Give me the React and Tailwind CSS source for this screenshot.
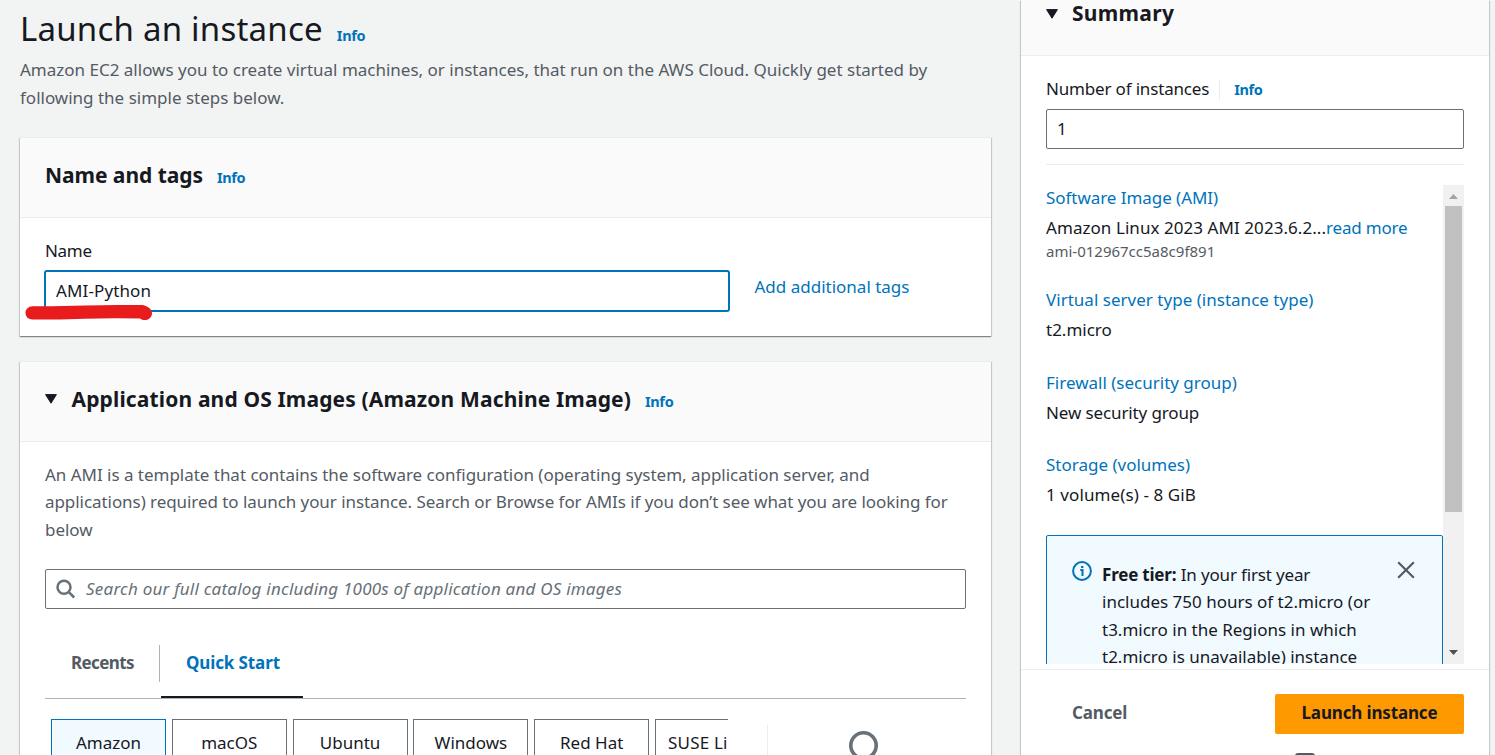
const cardShadow =
  'border-t border-[#eaeded] shadow-[0_1px_1px_0_rgba(0,28,36,0.3),1px_1px_1px_0_rgba(0,28,36,0.15),-1px_1px_1px_0_rgba(0,28,36,0.15)]';

function Info({ className = '' }) {
  return <a className={`text-[14.5px] font-bold tracking-[-0.35px] text-[#0073bb] ${className}`}>Info</a>;
}

function Caret({ className = '' }) {
  return (
    <svg className={`h-[10px] w-3 shrink-0 ${className}`} viewBox="0 0 12 10" fill="#16191f" stroke="#16191f" strokeLinejoin="round">
      <path d="M0.6 0.6h10.8L6 9.2z" />
    </svg>
  );
}

function SearchIcon() {
  return (
    <svg className="h-5 w-5 shrink-0" viewBox="0 0 20 20" fill="none" stroke="#687078" strokeWidth="2.5">
      <circle cx="8" cy="8.3" r="6.5" />
      <path d="M12.6 12.9l5.6 5.6" />
    </svg>
  );
}

function NameCard() {
  return (
    <section className={`relative h-[199px] bg-white ${cardShadow}`}>
      <header className="flex h-[80px] items-baseline gap-[14px] border-b border-[#eaeded] bg-[#fafafa] px-[25px] pt-[23px]">
        <h2 className="text-[21px] font-bold leading-7 tracking-[-0.05px]">Name and tags</h2>
        <Info />
      </header>
      <div className="px-[25px] pt-[19px]">
        <label className="block leading-[27px] tracking-[-0.3px]">Name</label>
        <div className="-ml-px mt-[6px] flex items-start">
          <div className="flex h-[42px] w-[686px] items-center rounded-[3px] border-2 border-[#0073bb] bg-white px-[10px] tracking-[0.12px]">
            AMI-Python
          </div>
          <a className="ml-[24.500px] mt-[3px] leading-[27px] text-[#0073bb]">Add additional tags</a>
        </div>
      </div>
      <svg className="absolute left-[5px] top-[166px] h-4 w-[128px]" viewBox="0 0 128 16" fill="#e81c1c">
        <path d="M7.500 2.300L27 2.200L60 1.400L92 1L117 1C122 1.600 127 4.800 127 9.200C127 13 124 16 120 16C118 16 116.500 15.600 115 14.400L90 14.300L60 14.700L35 15.500L7.500 15.500C3.500 15.500 0.500 12.700 0.500 9C0.500 5.300 3.500 2.300 7.500 2.300z" />
      </svg>
    </section>
  );
}

const osList = [
  { name: 'Amazon', selected: true },
  { name: 'macOS' },
  { name: 'Ubuntu' },
  { name: 'Windows' },
  { name: 'Red Hat' },
  { name: 'SUSE Li', cut: true },
];

function ImagesCard() {
  return (
    <section className={`mt-[25px] bg-white ${cardShadow}`}>
      <header className="flex h-[80px] items-baseline border-b border-[#eaeded] bg-[#fafafa] px-[25px] pt-[23px]">
        <Caret className="mt-[9px] self-start" />
        <h2 className="ml-[14.500px] text-[21px] font-bold leading-7 tracking-[0.145px]">
          Application and OS Images (Amazon Machine Image)
        </h2>
        <Info className="ml-[14px]" />
      </header>
      <div className="px-[25px] pt-[18.750px]">
        <p className="leading-[27.5px] tracking-[-0.06px] text-[#545b64]">
          <span className="tracking-[-0.025px]">
            An AMI is a template that contains the software configuration (operating system, application server, and
          </span>{' '}
          applications) required to launch your instance. Search or Browse for AMIs if you don’t see what you are looking
          for below
        </p>
        <div className="mt-[25.750px] flex h-10 items-center gap-[10px] rounded-[2px] border border-[#687078] px-[10px]">
          <SearchIcon />
          <span className="italic tracking-[0.22px] text-[#687078]">
            Search our full catalog including 1000s of application and OS images
          </span>
        </div>
        <nav className="mt-9 flex h-[54px] border-b border-[#aab7b8]">
          <div className="h-[37px] w-[115px] border-r border-[#aab7b8] pl-[26px]">
            <span className="block font-bold leading-[35px] tracking-[-0.6px] text-[#545b64]">Recents</span>
          </div>
          <div className="ml-px h-[53px] w-[142px] border-b-2 border-[#16191f] pl-[25px]">
            <span className="block font-bold leading-[35px] tracking-[-0.12px] text-[#0073bb]">Quick Start</span>
          </div>
        </nav>
        <div className="flex pl-[6px] pt-5">
          <div className="flex w-[677px] gap-[5.800px] overflow-hidden">
            {osList.map(({ name, selected, cut }) => (
              <div
                key={name}
                className={`h-20 w-[115px] shrink-0 border pt-[9px] leading-[27px] ${
                  selected ? 'border-[#0073bb] bg-[#f1faff]' : 'border-[#687078]'
                } ${cut ? 'pl-[12px] tracking-[0.2px]' : 'text-center'}`}
              >
                {name}
              </div>
            ))}
          </div>
          <div className="ml-[39px] mt-[6px] h-20 w-px bg-[#eaeded]" />
          <svg className="ml-[81px] mt-3 h-10 w-10 shrink-0" viewBox="0 0 40 40" fill="none" stroke="#687078" strokeWidth="3.6">
            <circle cx="14.500" cy="14.500" r="12.700" />
            <path d="M23.500 23.500l12 12" />
          </svg>
        </div>
      </div>
    </section>
  );
}

function Entry({ label, children, className = '' }) {
  return (
    <div className={`leading-6 ${className}`}>
      <a className="block text-[#0073bb]">{label}</a>
      <div className="mt-[6px]">{children}</div>
    </div>
  );
}

function FreeTier() {
  return (
    <div className="mt-[28px] flex h-[200px] items-start rounded-[2px] border border-[#0073bb] bg-[#f1faff] pl-[25px] pt-[25px]">
      <svg className="h-5 w-5 shrink-0" viewBox="0 0 20 20" fill="none" stroke="#0073bb" strokeWidth="2">
        <circle cx="10" cy="10" r="8.900" />
        <path d="M8.300 9h2.200v6M9 6h2.400" />
      </svg>
      <p className="-mt-[0.250px] ml-[10px] w-[280px] leading-[27.5px]">
        <b className="tracking-[-0.2px]">Free tier:</b> <span className="tracking-[-0.16px]">In your first year</span>
        <br />
        includes 750 hours of t2.micro (or
        <br />
        t3.micro in the Regions in which
        <br />
        t2.micro is unavailable) instance
      </p>
      <svg className="ml-[15px] h-[18px] w-[18px] shrink-0" viewBox="0 0 18 18" stroke="#545b64" strokeWidth="2.200">
        <path d="M1.200 1.200l15.600 15.600M16.800 1.200L1.200 16.800" />
      </svg>
    </div>
  );
}

function Scrollbar() {
  return (
    <div className="flex w-[21px] shrink-0 flex-col items-center bg-[#f1f1f1]">
      <svg className="h-[21px] w-[21px] shrink-0" viewBox="0 0 21 21" fill="#a3a3a3">
        <path d="M10.500 9L15 14H6z" />
      </svg>
      <div className="h-[306px] w-[17px] bg-[#c1c1c1]" />
      <svg className="mb-[2px] mt-auto h-[21px] w-[21px] shrink-0" viewBox="0 0 21 21" fill="#505050">
        <path d="M10.500 14L15 9H6z" />
      </svg>
    </div>
  );
}

function Summary() {
  return (
    <aside className="ml-[30px] flex h-[800px] w-[468px] shrink-0 flex-col bg-white shadow-[0_1px_1px_0_rgba(0,28,36,0.3),1px_1px_1px_0_rgba(0,28,36,0.15),-1px_1px_1px_0_rgba(0,28,36,0.15)]">
      <header className="flex h-[56px] shrink-0 items-start border-b border-[#eaeded] bg-[#fafafa] pl-[25px]">
        <Caret className="mt-[9px]" />
        <h2 className="-mt-px ml-[14px] text-[21px] font-bold leading-7 tracking-[0.3px]">Summary</h2>
      </header>
      <div className="px-[25px] pt-[19px]">
        <div className="flex h-[27px] items-center">
          <span className="leading-[27px] tracking-[-0.17px]">Number of instances</span>
          <span className="ml-[10px] mt-[3px] h-5 w-px bg-[#eaeded]" />
          <Info className="ml-[14px] mt-[2px]" />
        </div>
        <div className="mt-[7px] flex h-10 items-center rounded-[2px] border border-[#687078] px-[10px]">1</div>
        <div className="mt-[15px] h-px bg-[#eaeded]" />
        <div className="mt-5 flex h-[479px] overflow-hidden">
          <div className="min-w-0 flex-1 pt-px">
            <Entry label={<span className="tracking-[-0.05px]">Software Image (AMI)</span>}>
              <span className="tracking-[0.06px]">Amazon Linux 2023 AMI 2023.6.2...</span>
              <a className="tracking-[-0.2px] text-[#0073bb]">read more</a>
              <div className="-mt-px text-[15px] text-[#545b64]">ami-012967cc5a8c9f891</div>
            </Entry>
            <Entry className="mt-[25px]" label={<span className="tracking-[0.02px]">Virtual server type (instance type)</span>}>
              t2.micro
            </Entry>
            <Entry className="mt-[29px]" label="Firewall (security group)">
              <span className="tracking-[-0.12px]">New security group</span>
            </Entry>
            <Entry className="mt-[28px]" label="Storage (volumes)">
              <span className="tracking-[0.1px]">1 volume(s) - 8 GiB</span>
            </Entry>
            <FreeTier />
          </div>
          <Scrollbar />
        </div>
      </div>
      <footer className="mt-[5px] border-t border-[#eaeded] px-[25px] pt-6">
        <div className="flex items-center justify-between">
          <span className="mb-[2px] ml-[26px] font-bold tracking-[-0.17px] text-[#545b64]">Cancel</span>
          <button className="h-10 w-[189px] rounded-[2px] bg-[#ff9900] pb-[2px] font-bold tracking-[-0.15px] text-[#16191f]">
            Launch instance
          </button>
        </div>
        <div className="ml-[249px] mt-[18.500px] h-5 w-5 rounded-[3px] border-2 border-[#545b64]" />
      </footer>
    </aside>
  );
}

export default function App() {
  return (
    <div className="flex h-[755px] w-[1495px] overflow-hidden bg-[#f2f3f3] font-['Noto_Sans',sans-serif] text-[17px] text-[#16191f]">
      <main className="ml-5 w-[971px] shrink-0 pt-[6px]">
        <div className="flex items-baseline gap-[14px]">
          <h1 className="text-[33px] font-normal leading-[46px] tracking-[0.22px]">Launch an instance</h1>
          <Info />
        </div>
        <p className="mb-[26px] mt-1 leading-[27.5px] text-[#545b64]">
          Amazon EC2 allows you to create virtual machines, or instances, that run on the AWS Cloud. Quickly get started by
          following the simple steps below.
        </p>
        <NameCard />
        <ImagesCard />
      </main>
      <Summary />
    </div>
  );
}
